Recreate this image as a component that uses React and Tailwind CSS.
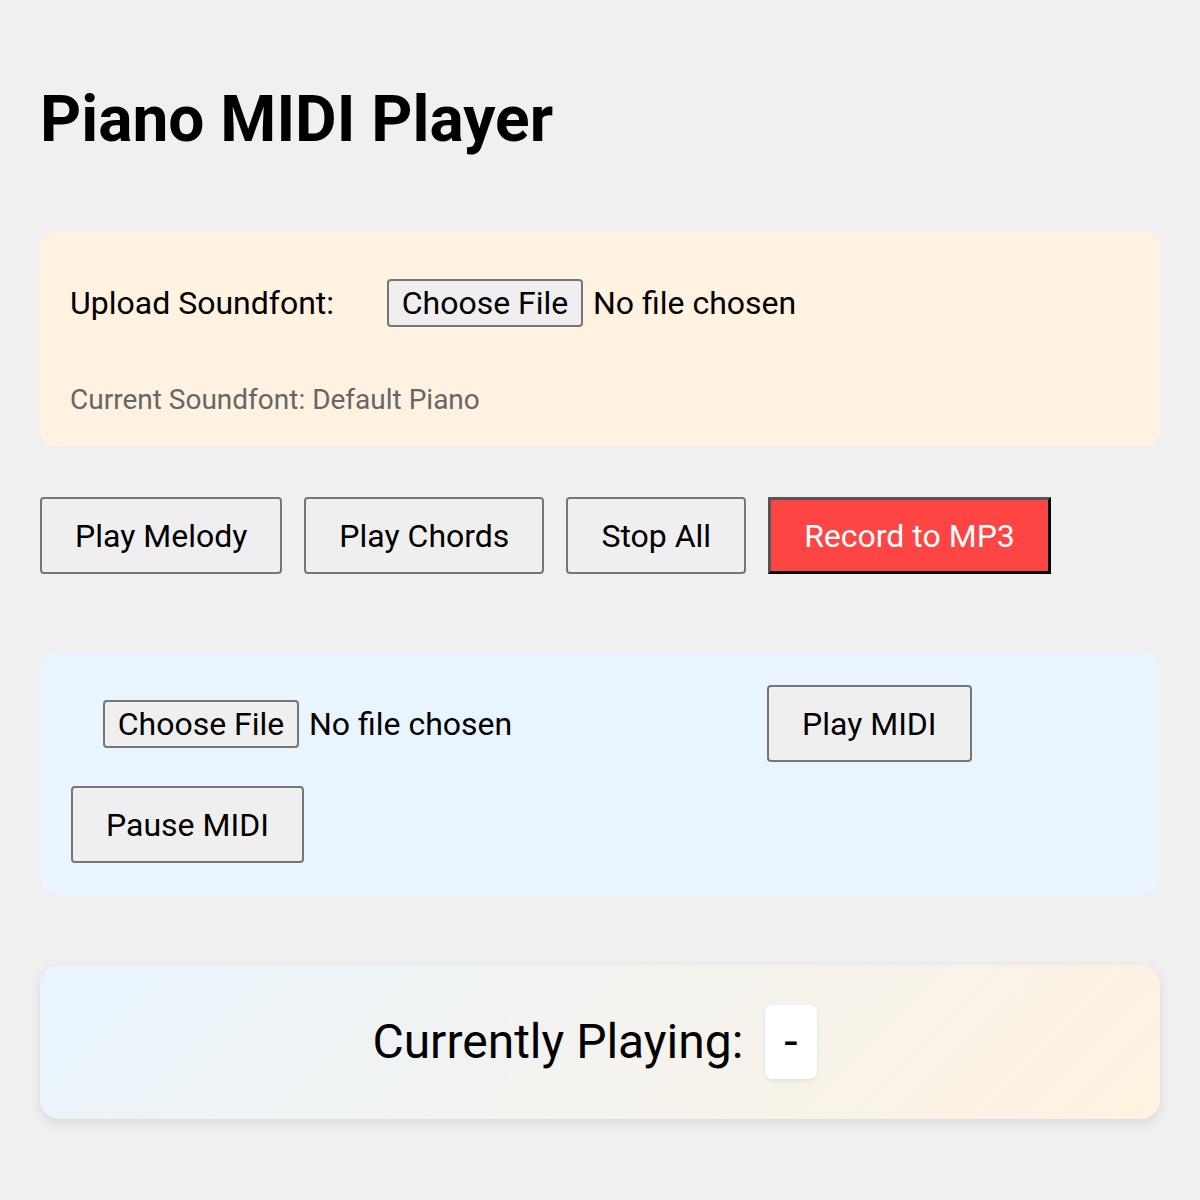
import React, { useState } from 'react';

const font = { fontFamily: 'Roboto, "Liberation Sans", sans-serif' };

function FilePicker({ className = '' }) {
  const [name, setName] = useState('');
  return (
    <label className={`flex items-center cursor-pointer ${className}`}>
      <input
        type="file"
        className="hidden"
        onChange={(e) => setName(e.target.files[0]?.name || '')}
      />
      <span className="h-[48px] w-[196px] flex items-center justify-center bg-[#efefef] border-2 border-[#767676] rounded-[4px] text-[32px] text-black">
        Choose File
      </span>
      <span className="ml-[10px] text-[32px] text-black">
        {name || 'No file chosen'}
      </span>
    </label>
  );
}

function Btn({ children, className = '' }) {
  return (
    <button
      className={`h-[77px] px-[33px] bg-[#efefef] border-2 border-[#767676] rounded-[4px] text-[32px] text-black ${className}`}
    >
      {children}
    </button>
  );
}

export default function App() {
  const [playing] = useState('-');

  return (
    <div className="min-h-[1200px] bg-[#f0f0f0] px-[40px] pb-[80px]" style={font}>
      <h1 className="pt-[88px] mb-[80px] text-[64px] leading-none font-bold text-black">
        Piano MIDI Player
      </h1>

      {/* soundfont */}
      <div className="bg-[#fff2e0] rounded-[16px] p-[30px]">
        <div className="h-[82px] flex items-center">
          <span className="text-[32px] text-black w-[317px]">Upload Soundfont:</span>
          <FilePicker />
        </div>
        <p className="mt-[40px] text-[28px] leading-[32px] text-[#666]">
          Current Soundfont: Default Piano
        </p>
      </div>

      {/* controls */}
      <div className="mt-[51px] flex gap-[22px]">
        <Btn>Play Melody</Btn>
        <Btn>Play Chords</Btn>
        <Btn>Stop All</Btn>
        <button className="h-[77px] px-[33px] bg-[#ff4444] border-[3px] border-t-[#555] border-l-[#555] border-b-black border-r-black text-[32px] text-white">
          Record to MP3
        </button>
      </div>

      {/* midi file */}
      <div className="mt-[80px] bg-[#e8f4fe] rounded-[16px] p-[31px] flex flex-wrap items-center gap-x-[22px] gap-y-[24px]">
        <div className="w-[674px] pl-[32px]">
          <FilePicker />
        </div>
        <Btn>Play MIDI</Btn>
        <Btn>Pause MIDI</Btn>
      </div>

      {/* now playing */}
      <div className="mt-[71px] rounded-[20px] p-[40px] flex items-center justify-center bg-[linear-gradient(135deg,#e8f4fe,#fff2e0)] shadow-[0_4px_12px_rgba(0,0,0,0.1)]">
        <span className="text-[48px] text-black">Currently Playing:</span>
        <span className="ml-[22px] mr-[11px] h-[74px] px-[19px] flex items-center bg-white rounded-[8px] text-[48px] text-black shadow-[0_2px_4px_rgba(0,0,0,0.08)]">
          {playing}
        </span>
      </div>
    </div>
  );
}
